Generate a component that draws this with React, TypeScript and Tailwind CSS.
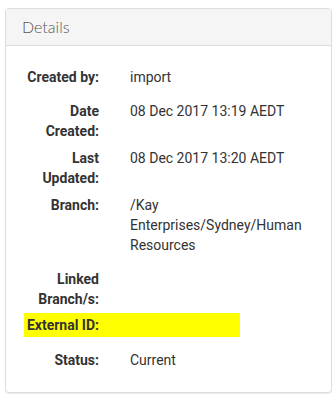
import React from 'react';

type Row = { label: React.ReactNode; value?: React.ReactNode; className: string };

const rows: Row[] = [
  { label: 'Created by:', value: 'import', className: 'mb-[14px]' },
  { label: 'Date Created:', value: '08 Dec 2017 13:19 AEDT', className: 'mb-[7px]' },
  { label: 'Last Updated:', value: '08 Dec 2017 13:20 AEDT', className: 'mb-[7px]' },
  { label: 'Branch:', value: '/Kay Enterprises/Sydney/Human Resources', className: 'mb-[14px]' },
  { label: 'Linked Branch/s:', className: 'mb-[4px]' },
];

function DetailRow({ label, value, className }: Row) {
  return (
    <div className={`flex ${className}`}>
      <div className="w-[75px] shrink-0 text-right font-bold text-[#333]">{label}</div>
      <div className="ml-[31px] w-[180px] text-[#333]">{value}</div>
    </div>
  );
}

export default function App() {
  return (
    <div className="min-h-[400px] bg-white pt-[8px] pl-[5px]">
      <div className="w-[327px] overflow-hidden rounded-[4px] border border-[#dddddd] bg-white shadow-[0_1px_1px_rgba(0,0,0,0.08)]">
        <div
          className="flex h-[37px] items-center border-b border-[#dddddd] bg-[#f5f5f5] px-[16px] text-[16px] font-light text-[#555]"
          style={{ fontFamily: 'Lato, "Open Sans", sans-serif' }}
        >
          Details
        </div>
        <div
          className="pl-[18px] pt-[21px] pb-[22px] text-[14px] leading-[20px]"
          style={{ fontFamily: 'Roboto, "Liberation Sans", sans-serif' }}
        >
          {rows.map((r, i) => (
            <DetailRow key={i} {...r} />
          ))}
          <div className="mb-[13px] w-[216px] bg-[#ffff00] py-[2px]">
            <div className="w-[75px] text-right font-bold text-[#333]">External ID:</div>
          </div>
          <DetailRow label="Status:" value="Current" className="" />
        </div>
      </div>
    </div>
  );
}
